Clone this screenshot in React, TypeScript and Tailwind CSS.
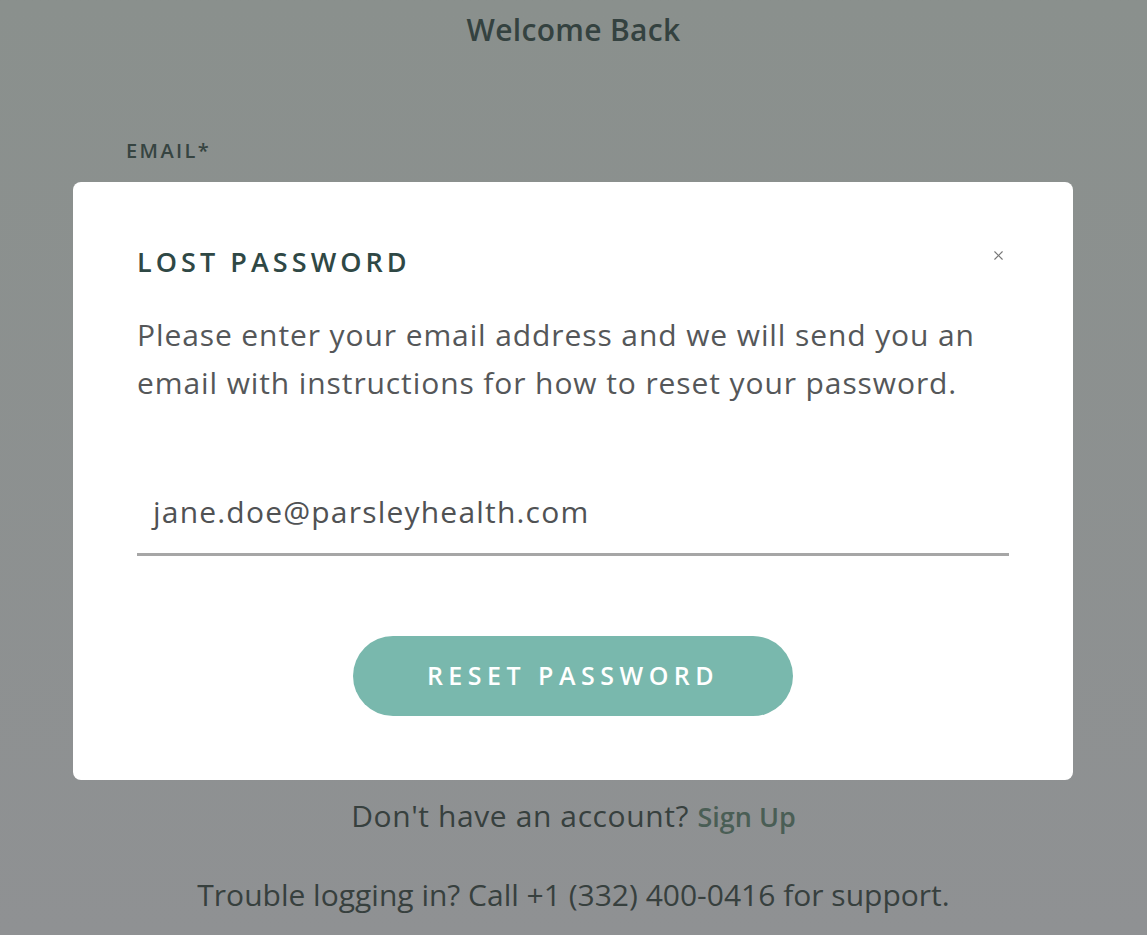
import { X } from 'lucide-react';

const font = { fontFamily: '"Open Sans", sans-serif' };

export default function App() {
  return (
    <div className="relative h-[935px] w-full overflow-hidden bg-gradient-to-b from-[#8a908d] to-[#8f9193]" style={font}>
      {/* Login page behind the modal */}
      <div className="flex flex-col items-center">
        <h1 className="mt-[12px] text-[30px] font-semibold leading-[36px] tracking-[0.01em] text-[#344240]">Welcome Back</h1>
        <div className="mt-[88px] w-full pl-[126px]">
          <label className="text-[20px] font-semibold tracking-[0.12em] text-[#364441]">EMAIL*</label>
        </div>
        <div className="mt-[632px] text-[30px] leading-[36px] tracking-[0.02em] text-[#37403e]">
          Don't have an account?{' '}
          <span className="text-[27px] font-semibold tracking-normal text-[#4a5e55]">Sign Up</span>
        </div>
        <p className="mt-[42px] text-[30px] leading-[36px] text-[#37403e]">
          Trouble logging in? Call +1 (332) 400-0416 for support.
        </p>
      </div>

      {/* Lost password modal */}
      <div className="absolute left-[73px] top-[182px] w-[1000px] rounded-[8px] bg-white px-[64px] pb-[64px] pt-[64px]">
        <button className="absolute right-[67px] top-[66px] text-[#777777]">
          <X size={15} strokeWidth={1.75} />
        </button>
        <h2 className="text-[27px] font-semibold leading-[32px] tracking-[0.15em] text-[#2f4845]">LOST PASSWORD</h2>
        <p className="mt-[33px] text-[30px] leading-[48px] tracking-[0.03em] text-[#555759]">
          Please enter your email address and we will send you an email with instructions for how to reset your password.
        </p>
        <div className="mt-[87px] border-b-[3px] border-[#a6a6a6] pb-[23px] pl-[16px] text-[30px] leading-[36px] tracking-[0.04em] text-[#505254]">
          jane.doe@parsleyhealth.com
        </div>
        <div className="mt-[80px] flex justify-center">
          <button className="h-[80px] w-[440px] rounded-full bg-[#79b8ad] text-[25px] font-semibold tracking-[0.22em] text-white">
            RESET PASSWORD
          </button>
        </div>
      </div>
    </div>
  );
}
